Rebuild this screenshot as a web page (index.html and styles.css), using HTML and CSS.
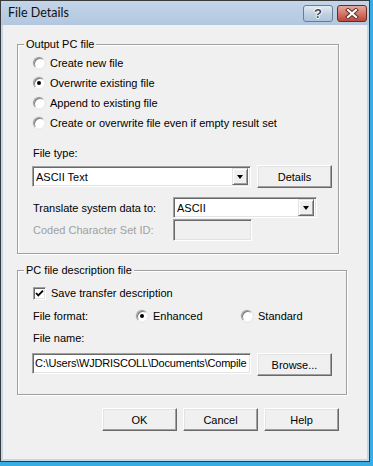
FILE: index.html
```html
<!DOCTYPE html>
<html>
<head>
<link rel="stylesheet" href="styles.css">
</head>
<body>
<div class="window">
	<div class="titlebar">
		<span class="title">File Details</span>
		<span class="cap cap-help">?</span>
		<span class="cap cap-close">
			<svg width="14" height="11" viewBox="0 0 14 11">
				<path d="M3 2 L11 9 M11 2 L3 9" stroke="#5a2a24" stroke-width="4" stroke-linecap="square"/>
				<path d="M3 2 L11 9 M11 2 L3 9" stroke="#fff" stroke-width="2.2" stroke-linecap="square"/>
			</svg>
		</span>
	</div>
	<div class="client">
		<fieldset class="group group-out">
			<legend>Output PC file</legend>
			<div class="opt"><span class="radio"></span>Create new file</div>
			<div class="opt"><span class="radio on"></span>Overwrite existing file</div>
			<div class="opt"><span class="radio"></span>Append to existing file</div>
			<div class="opt"><span class="radio"></span>Create or overwrite file even if empty result set</div>
			<div class="lbl lbl-type">File type:</div>
			<div class="row row-type">
				<div class="combo combo-type"><span class="combo-text">ASCII Text</span><span class="drop"></span></div>
				<div class="btn btn-side">Details</div>
			</div>
			<div class="row row-trans">
				<span class="row-label">Translate system data to:</span>
				<div class="combo combo-trans"><span class="combo-text">ASCII</span><span class="drop"></span></div>
			</div>
			<div class="row row-ccsid">
				<span class="row-label disabled">Coded Character Set ID:</span>
				<div class="edit edit-off"></div>
			</div>
		</fieldset>

		<fieldset class="group group-desc">
			<legend>PC file description file</legend>
			<div class="opt">
				<span class="check">
					<svg width="9" height="9" viewBox="0 0 9 9"><path d="M1 4 L3.3 6.4 L8 1.6" fill="none" stroke="#000" stroke-width="1.8"/></svg>
				</span>Save transfer description
			</div>
			<div class="row row-format">
				<span class="format-label">File format:</span>
				<span class="fmt"><span class="radio on"></span>Enhanced</span>
				<span class="fmt"><span class="radio"></span>Standard</span>
			</div>
			<div class="lbl lbl-name">File name:</div>
			<div class="row row-path">
				<div class="edit edit-path">C:\Users\WJDRISCOLL\Documents\Compile</div>
				<div class="btn btn-side">Browse...</div>
			</div>
		</fieldset>

		<div class="actions">
			<div class="btn">OK</div>
			<div class="btn">Cancel</div>
			<div class="btn">Help</div>
		</div>
	</div>
</div>
</body>
</html>
```

FILE: styles.css
```css
body{
	margin: 0;
	background: #38ade4;
	font-family: "Liberation Sans", Arial, sans-serif;
	font-size: 11px;
	color: #000;
}
.window{
	width: 368px;
	height: 460px;
	border: 1px solid #3a3a3a;
	background: #f0f0f0;
	display: flex;
	flex-direction: column;
}
.titlebar{
	height: 24px;
	flex: none;
	display: flex;
	align-items: flex-start;
	padding: 0 2px 0 7px;
	background: linear-gradient(#c3d5e9, #b2c7de);
}
.title{
	font-family: Lato, "Noto Sans", sans-serif;
	font-size: 12.5px;
	line-height: 24px;
	margin-right: auto;
	color: #111;
}
.cap{
	width: 30px;
	height: 17px;
	margin-top: 4px;
	box-sizing: border-box;
	border: 1px solid #6b7d93;
	border-radius: 3px;
	display: flex;
	align-items: center;
	justify-content: center;
}
.cap-help{
	background: linear-gradient(#e3eaf3, #c2d2e3 50%, #aec3da);
	font-family: "Liberation Sans", sans-serif;
	font-weight: bold;
	font-size: 13px;
	color: #3c4a5a;
	text-shadow: 1px 0 #fff, -1px 0 #fff, 0 1px #fff, 0 -1px #fff;
	margin-right: 4px;
}
.cap-close{
	background: linear-gradient(#e7a99b, #d3776a 50%, #c0463b);
	border-color: #6a2a22;
}
.client{
	flex: 1;
	border: 2px solid #c4d6ea;
	border-top: none;
	padding: 13px 0 0 14px;
}
.group{
	box-sizing: border-box;
	width: 322px;
	margin: 0;
	border: 1px solid #a0a0a0;
	box-shadow: inset 1px 1px #fff, 1px 1px #fff;
	padding: 2px 0 12px 14px;
}
.group legend{
	padding: 0 2px;
	margin-left: -8px;
	line-height: 13px;
	background: #f0f0f0;
}
.group-desc{
	margin-top: 10px;
	padding-top: 6px;
	padding-bottom: 18px;
}
.opt{
	display: flex;
	align-items: center;
	height: 20px;
	margin-left: 1px;
}
.radio{
	width: 12px;
	height: 12px;
	box-sizing: border-box;
	border-radius: 50%;
	background: #fff;
	border: 1px solid;
	border-color: #a0a0a0 #f8f8f8 #f8f8f8 #a0a0a0;
	box-shadow: inset 1px 1px #7a7a7a, 0 0 0 0.5px #dcdcdc;
	margin-right: 5px;
	display: flex;
	align-items: center;
	justify-content: center;
}
.radio.on::after{
	content: "";
	width: 4px;
	height: 4px;
	border-radius: 50%;
	background: #000;
}
.check{
	width: 13px;
	height: 13px;
	box-sizing: border-box;
	background: #fff;
	border: 1px solid;
	border-color: #a0a0a0 #fff #fff #a0a0a0;
	box-shadow: inset 1px 1px #696969, inset -1px -1px #e3e3e3;
	margin-right: 5px;
	display: flex;
	align-items: center;
	justify-content: center;
}
.lbl{
	height: 14px;
	line-height: 14px;
	margin-left: 1px;
}
.lbl-type{
	margin-top: 13px;
}
.lbl-name{
	margin-top: 5px;
}
.row{
	display: flex;
	align-items: center;
}
.row-type{
	margin-top: 5px;
	height: 23px;
}
.row-trans{
	margin-top: 9px;
}
.row-ccsid{
	margin-top: 1px;
}
.row-label{
	width: 140px;
	padding-left: 1px;
}
.disabled{
	color: #a0a0a0;
}
.combo{
	height: 21px;
	box-sizing: border-box;
	background: #fff;
	border: 1px solid;
	border-color: #a0a0a0 #fff #fff #a0a0a0;
	box-shadow: inset 1px 1px #696969, inset -1px -1px #e3e3e3;
	display: flex;
	align-items: center;
	padding: 0 2px 0 2px;
}
.combo-type{
	width: 219px;
}
.combo-trans{
	width: 144px;
}
.combo-text{
	flex: 1;
	padding-left: 1px;
}
.drop{
	width: 16px;
	height: 17px;
	box-sizing: border-box;
	background: #f0f0f0;
	border: 1px solid;
	border-color: #e3e3e3 #696969 #696969 #e3e3e3;
	box-shadow: inset 1px 1px #fff, inset -1px -1px #a0a0a0;
	display: flex;
	align-items: center;
	justify-content: center;
}
.drop::after{
	content: "";
	border-left: 3.5px solid transparent;
	border-right: 3.5px solid transparent;
	border-top: 4px solid #000;
	margin-top: 1px;
}
.edit{
	height: 21px;
	box-sizing: border-box;
	background: #fff;
	border: 1px solid;
	border-color: #a0a0a0 #fff #fff #a0a0a0;
	box-shadow: inset 1px 1px #696969, inset -1px -1px #e3e3e3;
}
.edit-off{
	width: 79px;
	height: 22px;
	background: #f0f0f0;
}
.edit-path{
	width: 219px;
	padding: 0 0 0 2px;
	line-height: 19px;
	letter-spacing: -0.2px;
	white-space: nowrap;
	overflow: hidden;
}
.btn{
	width: 75px;
	height: 23px;
	box-sizing: border-box;
	background: #f0f0f0;
	border: 1px solid;
	border-color: #fff #696969 #696969 #fff;
	box-shadow: inset -1px -1px #a0a0a0, inset 1px 1px #e3e3e3;
	display: flex;
	align-items: center;
	justify-content: center;
}
.btn-side{
	margin-left: 6px;
}
.row-format{
	margin-top: 3px;
	height: 20px;
	padding-left: 1px;
}
.format-label{
	width: 103px;
}
.fmt{
	display: flex;
	align-items: center;
	width: 105px;
}
.row-path{
	margin-top: 8px;
	align-items: flex-start;
}
.actions{
	width: 322px;
	display: flex;
	justify-content: flex-end;
	gap: 6px;
	margin-top: 13px;
}
```
